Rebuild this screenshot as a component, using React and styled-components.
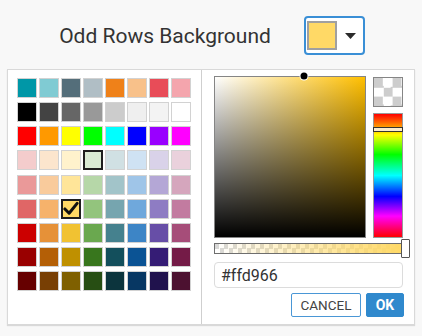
import React from "react";
import styled, { createGlobalStyle } from "styled-components";

const Global = createGlobalStyle`
  html, body { margin: 0; padding: 0; background: #f8f8f8; }
  body { font-family: Roboto, "Liberation Sans", Arial, sans-serif; }
  * { box-sizing: border-box; }
`;

const PALETTE = [
  ["#0097a7", "#80cbd3", "#546e7a", "#b0bec5", "#ef8119", "#f8c18a", "#e84c58", "#f4a5ad"],
  ["#000000", "#434343", "#666666", "#999999", "#cccccc", "#efefef", "#f3f3f3", "#ffffff"],
  ["#ff0000", "#ff9900", "#ffff00", "#00ff00", "#00ffff", "#0000ff", "#9900ff", "#ff00ff"],
  ["#f4cccc", "#fce5cd", "#fff2cc", "#d9ead3", "#d0e0e3", "#cfe2f3", "#d9d2e9", "#ead1dc"],
  ["#ea9999", "#f9cb9c", "#ffe599", "#b6d7a8", "#a2c4c9", "#9fc5e8", "#b4a7d6", "#d5a6bd"],
  ["#e06666", "#f6b26b", "#ffd966", "#93c47d", "#76a5af", "#6fa8dc", "#8e7cc3", "#c27ba0"],
  ["#cc0000", "#e69138", "#f1c232", "#6aa84f", "#45818e", "#3d85c6", "#674ea7", "#a64d79"],
  ["#990000", "#b45f06", "#bf9000", "#38761d", "#134f5c", "#0b5394", "#351c75", "#741b47"],
  ["#660000", "#783f04", "#7f6000", "#274e13", "#0c343d", "#073763", "#20124d", "#4c1130"],
];

const Page = styled.div`
  width: 422px;
  height: 336px;
  display: flex;
  flex-direction: column;
  padding: 16px 7px 0 7px;
`;

const Header = styled.div`
  display: flex;
  align-items: center;
  justify-content: center;
  gap: 33px;
  height: 39px;
  padding-left: 2px;
`;

const Title = styled.div`
  font-size: 21px;
  color: #333;
  letter-spacing: 0;
`;

const DropButton = styled.div`
  width: 61px;
  height: 39px;
  border: 2px solid #3a8fd6;
  border-radius: 4px;
  background: #fff;
  display: flex;
  align-items: center;
  padding-left: 1px;
  gap: 8px;
`;

const CurrentSwatch = styled.div`
  width: 30px;
  height: 29px;
  border: 2px solid #a0a0a0;
  background: ${(p) => p.$color};
`;

const Panel = styled.div`
  margin-top: 14px;
  width: 408px;
  height: 256px;
  display: flex;
  background: #fff;
  border: 1px solid #d9d9d9;
  box-shadow: 0 1px 1px rgba(0, 0, 0, 0.12);
`;

const PalettePane = styled.div`
  width: 194px;
  border-right: 1px solid #cfcfcf;
  padding: 8px 0 0 9px;
`;

const SwatchGrid = styled.div`
  display: grid;
  grid-template-columns: repeat(8, 20px);
  grid-auto-rows: 20px;
  column-gap: 2px;
  row-gap: 4.125px;
`;

const Swatch = styled.div`
  position: relative;
  background: ${(p) => p.$color};
  border: ${(p) => (p.$active ? "2px solid #1e1e1e" : "1px solid #d2d2d2")};
  display: flex;
  align-items: center;
  justify-content: center;
`;

const PickerPane = styled.div`
  flex: 1;
  display: flex;
  flex-direction: column;
  padding: 6px 10px 0 12px;
`;

const TopRow = styled.div`
  display: flex;
  gap: 7px;
`;

const SatBox = styled.div`
  position: relative;
  width: 152px;
  height: 162px;
  border: 1px solid #858585;
  background: linear-gradient(to top, #000, rgba(0, 0, 0, 0)),
    linear-gradient(to right, #fff, #ffbf00);
`;

const SatHandle = styled.div`
  position: absolute;
  left: 59%;
  top: -1px;
  width: 7px;
  height: 7px;
  border-radius: 50%;
  background: #000;
  box-shadow: 0 0 0 1px #fff;
  transform: translate(-50%, -50%);
`;

const SideColumn = styled.div`
  display: flex;
  flex-direction: column;
  gap: 6px;
  padding-top: 1px;
`;

const Preview = styled.div`
  width: 30px;
  height: 30px;
  border: 1px solid #858585;
  background: repeating-conic-gradient(#fff 0 25%, #cdcdcd 0 50%) 0 0 / 18.6px 18.6px;
`;

const HueBar = styled.div`
  position: relative;
  width: 30px;
  height: 125px;
  border: 1px solid #9a9a9a;
  background: linear-gradient(
    to bottom,
    #ff0000 0%,
    #ffff00 17%,
    #00ff00 33%,
    #00ffff 50%,
    #0000ff 67%,
    #ff00ff 83%,
    #ff0000 100%
  );
`;

const HueHandle = styled.div`
  position: absolute;
  left: -1px;
  right: -1px;
  top: 13px;
  height: 5px;
  background: #fdeccc;
  border: 1px solid #333;
`;

const AlphaBar = styled.div`
  position: relative;
  margin-top: 5px;
  width: 188px;
  height: 11px;
  border: 1px solid #6e6e6e;
  background: linear-gradient(to right, rgba(255, 217, 102, 0), #ffd966),
    repeating-conic-gradient(#fff 0 25%, #d8d8d8 0 50%) 0 0 / 9px 9px;
`;

const AlphaHandle = styled.div`
  position: absolute;
  right: -9px;
  top: -5px;
  width: 9px;
  height: 19px;
  background: #fff;
  border: 1px solid #555;
  border-radius: 1px;
`;

const HexInput = styled.input`
  margin-top: 8px;
  width: 189px;
  height: 26px;
  border: 1px solid #dcdcdc;
  border-radius: 4px;
  padding: 0 6px;
  font-family: Roboto, "Liberation Sans", Arial, sans-serif;
  font-size: 16px;
  color: #333;
  outline: none;
  background: #fff;
`;

const Actions = styled.div`
  margin-top: 5px;
  display: flex;
  justify-content: flex-end;
  gap: 5px;
  width: 190px;
`;

const Button = styled.button`
  height: 24px;
  padding: 0;
  width: ${(p) => (p.$primary ? "38px" : "70px")};
  border: 1px solid ${(p) => (p.$primary ? "#3089cd" : "#4a97d6")};
  border-radius: 2px;
  background: ${(p) => (p.$primary ? "#3089cd" : "#fff")};
  color: ${(p) => (p.$primary ? "#fff" : "#444")};
  font-family: Roboto, "Liberation Sans", Arial, sans-serif;
  font-size: ${(p) => (p.$primary ? "14px" : "13.5px")};
  font-weight: ${(p) => (p.$primary ? 700 : 400)};
  display: flex;
  align-items: center;
  justify-content: center;
`;

const Check = () => (
  <svg width="17" height="15" viewBox="0 0 17 15">
    <path d="M2 8 L6.5 12.5 L15 2" fill="none" stroke="#111" strokeWidth="3.2" strokeLinecap="round" strokeLinejoin="round" />
  </svg>
);

const Caret = () => (
  <svg width="11" height="6" viewBox="0 0 11 6">
    <path d="M0 0 L11 0 L5.5 6 Z" fill="#2b2b2b" />
  </svg>
);

export default function App() {
  return (
    <>
      <Global />
      <Page>
        <Header>
          <Title>Odd Rows Background</Title>
          <DropButton>
            <CurrentSwatch $color="#ffd966" />
            <Caret />
          </DropButton>
        </Header>
        <Panel>
          <PalettePane>
            <SwatchGrid>
              {PALETTE.flatMap((row, r) =>
                row.map((c, i) => {
                  const selected = r === 5 && i === 2;
                  const hovered = r === 3 && i === 3;
                  return (
                    <Swatch key={`${r}-${i}`} $color={c} $active={selected || hovered}>
                      {selected && <Check />}
                    </Swatch>
                  );
                })
              )}
            </SwatchGrid>
          </PalettePane>
          <PickerPane>
            <TopRow>
              <SatBox>
                <SatHandle />
              </SatBox>
              <SideColumn>
                <Preview />
                <HueBar>
                  <HueHandle />
                </HueBar>
              </SideColumn>
            </TopRow>
            <AlphaBar>
              <AlphaHandle />
            </AlphaBar>
            <HexInput defaultValue="#ffd966" />
            <Actions>
              <Button>CANCEL</Button>
              <Button $primary>OK</Button>
            </Actions>
          </PickerPane>
        </Panel>
      </Page>
    </>
  );
}
